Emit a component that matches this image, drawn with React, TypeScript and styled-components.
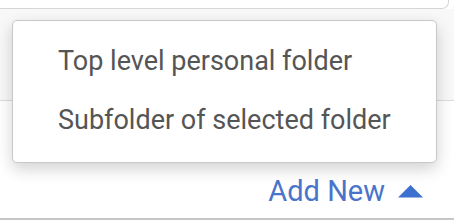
import React from "react";
import styled, { createGlobalStyle } from "styled-components";

const Global = createGlobalStyle`
  html, body { margin: 0; padding: 0; background: #ffffff; }
  body { font-family: Roboto, "Noto Sans", Arial, sans-serif; overflow: hidden; }
  * { box-sizing: border-box; }
`;

const Page = styled.div`
  position: relative;
  width: 454px;
  height: 220px;
  display: flex;
  flex-direction: column;
  background: #ffffff;
`;

const SearchField = styled.div`
  height: 9px;
  margin: 0 5px 0 -10px;
  border: 1px solid #d6d6d6;
  border-top: none;
  border-radius: 0 0 7px 7px;
  background: #ffffff;
  flex: none;
`;

const ListArea = styled.div`
  height: 92px;
  border-bottom: 1px solid #dcdcdc;
  background: #f8f8f8;
  flex: none;
`;

const Spacer = styled.div`
  flex: 1;
`;

const Footer = styled.div`
  display: flex;
  justify-content: flex-end;
  align-items: center;
  height: 56px;
  padding-right: 31px;
  border-bottom: 2px solid #c6c6c6;
  flex: none;
`;

const AddButton = styled.button`
  display: flex;
  align-items: center;
  gap: 13px;
  border: none;
  background: transparent;
  padding: 0;
  font-family: Roboto, "Noto Sans", Arial, sans-serif;
  font-size: 29px;
  color: #4a74c9;
  cursor: pointer;
`;

const Menu = styled.div`
  position: absolute;
  left: 12px;
  top: 20px;
  width: 425px;
  height: 143px;
  padding: 10px 0 12px;
  background: #ffffff;
  border: 1px solid #c8c8c8;
  border-radius: 5px;
  box-shadow: 0 6px 16px rgba(0, 0, 0, 0.18);
  display: flex;
  flex-direction: column;
`;

const MenuItem = styled.div`
  height: 60px;
  display: flex;
  align-items: center;
  padding-left: 45px;
  font-size: 27px;
  color: #555555;
  white-space: nowrap;
`;

const Caret = () => (
  <svg width="25" height="13" viewBox="0 0 25 13" aria-hidden="true">
    <path d="M0 12.5 L12.5 0 L25 12.5 Z" fill="#3d6fd0" />
  </svg>
);

export default function App() {
  return (
    <Page>
      <Global />
      <SearchField />
      <ListArea />
      <Spacer />
      <Footer>
        <AddButton>
          Add New
          <Caret />
        </AddButton>
      </Footer>
      <Menu>
        <MenuItem>Top level personal folder</MenuItem>
        <MenuItem>Subfolder of selected folder</MenuItem>
      </Menu>
    </Page>
  );
}
